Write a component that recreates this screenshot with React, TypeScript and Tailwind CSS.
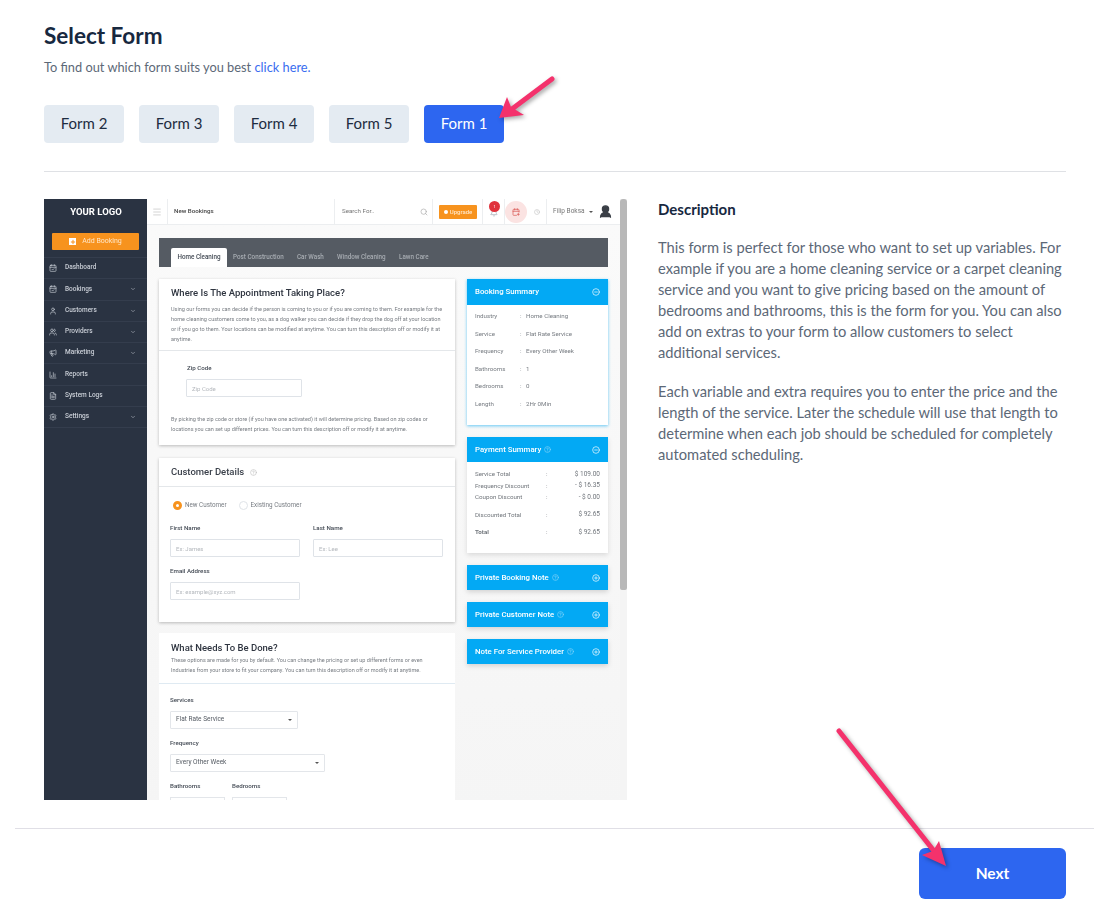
import { BarChart3, Bell, CalendarCheck, CalendarPlus, ChevronDown, CircleHelp, CircleMinus, CirclePlus, Clock, FileText, Megaphone, Menu, Plus, Search, Settings, User, UserRound, Users } from "lucide-react";
import type { ReactNode } from "react";

const forms = ["Form 2", "Form 3", "Form 4", "Form 5", "Form 1"];

const navItems = [
    { label: "Dashboard", icon: CalendarCheck, caret: false },
    { label: "Bookings", icon: CalendarCheck, caret: true },
    { label: "Customers", icon: User, caret: true },
    { label: "Providers", icon: Users, caret: true },
    { label: "Marketing", icon: Megaphone, caret: true },
    { label: "Reports", icon: BarChart3, caret: false },
    { label: "System Logs", icon: FileText, caret: false },
    { label: "Settings", icon: Settings, caret: true },
];

const bookingRows = [
    ["Industry", "Home Cleaning"],
    ["Service", "Flat Rate Service"],
    ["Frequency", "Every Other Week"],
    ["Bathrooms", "1"],
    ["Bedrooms", "0"],
    ["Length", "2Hr 0Min"],
];

function FieldLabel({ children }: { children: ReactNode }) {
    return <div className="h-[8px] text-[6.2px] leading-[8px] font-medium text-[#444b55]">{children}</div>;
}

function FakeInput({ text, className }: { text: string; className: string }) {
    return (
        <div className={`mt-[7px] h-[18px] flex items-center px-[5px] border border-[#dfe3e8] rounded-[1px] bg-white text-[6px] text-[#b4b8bd] ${className}`}>
            {text}
        </div>
    );
}

function FakeSelect({ text, className }: { text: string; className: string }) {
    return (
        <div className={`mt-[7px] h-[18px] flex items-center justify-between px-[5px] border border-[#e3e6ea] rounded-[1px] bg-white text-[6.5px] text-[#555b63] ${className}`}>
            {text}
            <span className="w-0 h-0 border-x-[2px] border-x-transparent border-t-[2px] border-t-[#555]" />
        </div>
    );
}

function NoteHeader({ title }: { title: string }) {
    return (
        <div className="h-[25px] flex items-center justify-between px-[8px] bg-[#03a9f4] text-white text-[7.8px] font-medium shadow-[0_2px_5px_rgba(0,0,0,0.15)]">
            <span className="flex items-center gap-[3px]">
                {title}
                <CircleHelp size={7} className="text-[#8fd8fa]" />
            </span>
            <CirclePlus size={8} />
        </div>
    );
}

function PaymentRow({ label, value, className = "" }: { label: string; value: string; className?: string }) {
    return (
        <div className="flex h-[11.5px] items-center text-[6.2px] text-[#71767c]">
            <span className={`w-[71px] ${className}`}>{label}</span>
            <span>:</span>
            <span className="ml-auto text-[6.5px]">{value}</span>
        </div>
    );
}

function Preview() {
    return (
        <div className="w-[583px] h-[601px] flex overflow-hidden bg-[#f4f4f4] font-['Roboto',sans-serif] blur-[0.3px]">
            <div className="w-[103px] shrink-0 bg-[#2a3342] text-[#c9ced6]">
                <div className="h-[26px] flex items-center justify-center pl-[1px] text-[9.5px] font-bold text-white">YOUR LOGO</div>
                <div className="h-[32px] pt-[8px] px-[8px]">
                    <div className="h-[17px] rounded-[1px] bg-[#f7931e] flex items-center justify-center gap-[6px] text-[7px] text-[#ffe6c7]">
                        <span className="w-[7px] h-[7px] bg-white flex items-center justify-center">
                            <Plus size={6} strokeWidth={4} className="text-[#f7931e]" />
                        </span>
                        Add Booking
                    </div>
                </div>
                {navItems.map(item => (
                    <div key={item.label} className="h-[21.3px] flex items-center pl-[5px] pr-[11px] border-t border-[#343d4d] text-[6.5px] font-medium">
                        <item.icon size={8} className="mr-[8px] shrink-0" />
                        {item.label}
                        {item.caret && <ChevronDown size={6} className="ml-auto" />}
                    </div>
                ))}
                <div className="border-t border-[#343d4d]" />
            </div>

            <div className="w-[473px] shrink-0 flex flex-col">
                <div className="h-[26px] shrink-0 flex items-center bg-white border-b border-[#eceef0] text-[6.2px] text-[#777]">
                    <div className="w-[21px] h-full flex items-center justify-center border-r border-[#eceef0]">
                        <Menu size={10} strokeWidth={1.2} className="text-[#aaa]" />
                    </div>
                    <div className="w-[167px] h-full flex items-center pl-[6px] border-r border-[#eceef0] font-medium text-[#444]">New Bookings</div>
                    <div className="w-[98px] h-full flex items-center justify-between pl-[7px] pr-[4px] border-r border-[#eceef0]">
                        Search For..
                        <Search size={8} className="text-[#aaa]" />
                    </div>
                    <div className="w-[50px] h-full flex items-center pl-[6px] border-r border-[#eceef0]">
                        <div className="w-[38px] h-[14px] bg-[#f7931e] rounded-[1px] flex items-center justify-center gap-[2px] text-[6px] text-[#ffe6c7] font-medium">
                            <span className="w-[4px] h-[4px] rounded-full bg-white" />
                            Upgrade
                        </div>
                    </div>
                    <div className="relative w-[22px] h-full flex items-center justify-center border-r border-[#eceef0]">
                        <Bell size={8} className="text-[#9aa3ad] mt-[3px]" />
                        <span className="absolute top-[2px] left-[6px] w-[11px] h-[11px] rounded-full bg-[#e0323c] flex items-center justify-center text-[4px] text-white">1</span>
                    </div>
                    <div className="w-[22px] h-[22px] rounded-full bg-[#fbe3e2] flex items-center justify-center">
                        <CalendarPlus size={8} className="text-[#d9534f]" />
                    </div>
                    <div className="w-[20px] h-full flex items-center justify-center border-r border-[#eceef0]">
                        <Clock size={6} className="text-[#bbb]" />
                    </div>
                    <div className="flex-1 h-full flex items-center pl-[6px] text-[6.5px]">
                        Filip Boksa
                        <span className="ml-[4px] w-0 h-0 border-x-[2px] border-x-transparent border-t-[2px] border-t-[#555]" />
                        <UserRound size={15} fill="#3a3f46" className="ml-[5px] text-[#3a3f46]" />
                    </div>
                </div>

                <div className="flex-1 px-[12px] pt-[13px] bg-gradient-to-b from-[#fafafa] to-[#f5f5f5]">
                    <div className="h-[29px] pt-[10px] pl-[12px] flex bg-[#555b63] text-[6.3px] font-medium text-[#a7acb2]">
                        <div className="w-[56px] h-[19px] bg-white rounded-t-[2px] flex items-center justify-center text-[#444b55]">Home Cleaning</div>
                        <div className="ml-[6px] h-[19px] flex items-center w-[64px]">Post Construction</div>
                        <div className="h-[19px] flex items-center w-[40px]">Car Wash</div>
                        <div className="h-[19px] flex items-center w-[62px]">Window Cleaning</div>
                        <div className="h-[19px] flex items-center">Lawn Care</div>
                    </div>

                    <div className="mt-[12px] flex gap-[12px]">
                        <div className="w-[296px] shrink-0">
                            <div className="h-[166px] bg-white shadow-[0_1px_3px_rgba(0,0,0,0.25)]">
                                <div className="h-[72px] px-[12px] pt-[7px] border-b border-[#e4e7ea]">
                                    <div className="h-[14px] text-[9.5px] leading-[14px] font-medium text-[#2f3540]">Where Is The Appointment Taking Place?</div>
                                    <div className="mt-[4px] text-[5.5px] leading-[10px] text-[#777c82] whitespace-nowrap">
                                        <div>Using our forms you can decide if the person is coming to you or if you are coming to them. For example for the</div>
                                        <div>home cleaning customers come to you, as a dog walker you can decide if they drop the dog off at your location</div>
                                        <div>or if you go to them. Your locations can be modified at anytime. You can turn this description off or modify it at</div>
                                        <div>anytime.</div>
                                    </div>
                                </div>
                                <div className="pt-[13px] px-[28px]">
                                    <FieldLabel>Zip Code</FieldLabel>
                                    <FakeInput text="Zip Code" className="w-[116px] -ml-[1px]" />
                                </div>
                                <div className="mt-[17px] px-[12px] text-[5.5px] leading-[10px] text-[#777c82] whitespace-nowrap">
                                    <div>By picking the zip code or store (if you have one activated) it will determine pricing. Based on zip codes or</div>
                                    <div>locations you can set up different prices. You can turn this description off or modify it at anytime.</div>
                                </div>
                            </div>

                            <div className="mt-[13px] h-[164px] bg-white shadow-[0_1px_3px_rgba(0,0,0,0.25)]">
                                <div className="h-[29px] px-[12px] pt-[1px] flex items-center gap-[6px] border-b border-[#e4e7ea] text-[9.5px] font-medium text-[#3b414b]">
                                    Customer Details
                                    <CircleHelp size={7} className="text-[#bbb]" />
                                </div>
                                <div className="px-[11px]">
                                    <div className="mt-[12px] h-[12px] leading-[12px] pl-[3px] flex items-center text-[6.3px] text-[#777c82]">
                                        <span className="w-[9px] h-[9px] rounded-full border-[3px] border-[#f7931e] bg-white mr-[3px]" />
                                        New Customer
                                        <span className="w-[9px] h-[9px] rounded-full border border-[#dfe3e8] ml-[12px] mr-[3px]" />
                                        Existing Customer
                                    </div>
                                    <div className="mt-[13px] grid grid-cols-[130px_130px] gap-x-[13px]">
                                        <div>
                                            <FieldLabel>First Name</FieldLabel>
                                            <FakeInput text="Ex: James" className="w-[130px]" />
                                        </div>
                                        <div>
                                            <FieldLabel>Last Name</FieldLabel>
                                            <FakeInput text="Ex: Lee" className="w-[130px]" />
                                        </div>
                                    </div>
                                    <div className="mt-[10px]">
                                        <FieldLabel>Email Address</FieldLabel>
                                        <FakeInput text="Ex: example@xyz.com" className="w-[130px]" />
                                    </div>
                                </div>
                            </div>

                            <div className="mt-[11px] h-[180px] bg-white">
                                <div className="h-[51px] px-[12px] pt-[8px] border-b border-[#dfeaf2]">
                                    <div className="h-[14px] text-[9.5px] leading-[14px] font-medium text-[#2f3540]">What Needs To Be Done?</div>
                                    <div className="text-[5.5px] leading-[10px] text-[#777c82] whitespace-nowrap">
                                        <div>These options are made for you by default. You can change the pricing or set up different forms or even</div>
                                        <div>Industries from your store to fit your company. You can turn this description off or modify it at anytime.</div>
                                    </div>
                                </div>
                                <div className="px-[11px] pt-[12px]">
                                    <FieldLabel>Services</FieldLabel>
                                    <FakeSelect text="Flat Rate Service" className="w-[128px]" />
                                    <div className="mt-[10px]">
                                        <FieldLabel>Frequency</FieldLabel>
                                    </div>
                                    <FakeSelect text="Every Other Week" className="w-[155px]" />
                                    <div className="mt-[10px] flex gap-[7px]">
                                        <div className="w-[55px]">
                                            <FieldLabel>Bathrooms</FieldLabel>
                                            <div className="mt-[7px] h-[18px] border border-[#e3e6ea]" />
                                        </div>
                                        <div className="w-[55px]">
                                            <FieldLabel>Bedrooms</FieldLabel>
                                            <div className="mt-[7px] h-[18px] border border-[#e3e6ea]" />
                                        </div>
                                    </div>
                                </div>
                            </div>
                        </div>

                        <div className="w-[141px] shrink-0 flex flex-col gap-[12px]">
                            <div className="h-[146px] bg-white shadow-[0_1px_3px_rgba(3,169,244,0.6)]">
                                <div className="h-[26px] flex items-center justify-between px-[8px] bg-[#03a9f4] text-white text-[7.8px] font-medium">
                                    Booking Summary
                                    <CircleMinus size={8} />
                                </div>
                                <div className="pt-[3px] px-[8px]">
                                    {bookingRows.map(([label, value]) => (
                                        <div key={label} className="h-[17.5px] flex items-center text-[6.2px] text-[#777c82]">
                                            <span className="w-[45px]">{label}</span>
                                            <span className="w-[6px]">:</span>
                                            {value}
                                        </div>
                                    ))}
                                </div>
                            </div>

                            <div className="h-[116px] bg-white shadow-[0_2px_5px_rgba(0,0,0,0.12)]">
                                <div className="h-[25px] flex items-center justify-between px-[8px] bg-[#03a9f4] text-white text-[7.8px] font-medium">
                                    <span className="flex items-center gap-[3px]">
                                        Payment Summary
                                        <CircleHelp size={7} className="text-[#8fd8fa]" />
                                    </span>
                                    <CircleMinus size={8} />
                                </div>
                                <div className="pt-[7px] pl-[8px] pr-[8px]">
                                    <PaymentRow label="Service Total" value="$ 109.00" />
                                    <PaymentRow label="Frequency Discount" value="- $ 16.35" />
                                    <PaymentRow label="Coupon Discount" value="- $ 0.00" />
                                    <div className="mt-[6px]">
                                        <PaymentRow label="Discounted Total" value="$ 92.65" />
                                    </div>
                                    <div className="mt-[6px]">
                                        <PaymentRow label="Total" value="$ 92.65" className="font-bold" />
                                    </div>
                                </div>
                            </div>

                            <NoteHeader title="Private Booking Note" />
                            <NoteHeader title="Private Customer Note" />
                            <NoteHeader title="Note For Service Provider" />
                        </div>
                    </div>
                </div>
            </div>

            <div className="w-[7px] shrink-0 bg-[#f4f4f4]">
                <div className="h-[391px] rounded-b-[2px] rounded-t-[3px] bg-[#b8b8b8]" />
            </div>
        </div>
    );
}

export default function App() {
    return (
        <div className="relative w-[1108px] h-[916px] bg-white font-['Lato',sans-serif] overflow-hidden">
            <div className="pl-[44px] pr-[42px] pt-[22px]">
                <h1 className="text-[22.5px] leading-[28px] font-bold text-[#17283f]">Select Form</h1>
                <p className="mt-[7px] text-[12.8px] leading-[20px] text-[#5c6877]">
                    To find out which form suits you best <a className="text-[#3a6df0]">click here.</a>
                </p>
                <div className="mt-[28px] flex gap-[15px]">
                    {forms.map(form => (
                        <button
                            key={form}
                            className={form === "Form 1"
                                ? "w-[80px] h-[38px] pb-[2px] rounded-[4px] bg-[#2d66f0] text-white text-[15px]"
                                : "w-[80px] h-[38px] pb-[2px] rounded-[4px] bg-[#e4ebf2] text-[#1d2c40] text-[15px]"}
                        >
                            {form}
                        </button>
                    ))}
                </div>
                <div className="mt-[28px] border-t border-[#dfe1e5]" />
                <div className="mt-[27px] flex gap-[31px]">
                    <Preview />
                    <div className="w-[408px] shrink-0">
                        <h2 className="text-[15px] leading-[21px] font-bold text-[#17283f]">Description</h2>
                        <div className="mt-[17px] text-[14.7px] leading-[21px] text-[#5c6877]">
                            <p>This form is perfect for those who want to set up variables. For example if you are a home cleaning service or a carpet cleaning service and you want to give pricing based on the amount of bedrooms and bathrooms, this is the form for you. You can also add on extras to your form to allow customers to select additional services.</p>
                            <p className="mt-[18px]">Each variable and extra requires you to enter the price and the length of the service. Later the schedule will use that length to determine when each job should be scheduled for completely automated scheduling.</p>
                        </div>
                    </div>
                </div>
            </div>

            <div className="mt-[28px] mx-[15px] w-[1079px] border-t border-[#e0dfe6]" />
            <div className="mt-[19px] pr-[42px] flex justify-end">
                <button className="w-[147px] h-[51px] rounded-[6px] bg-[#2d66f0] text-white text-[15.5px] font-bold">Next</button>
            </div>

            <svg className="absolute left-0 top-0 pointer-events-none drop-shadow-[2px_2px_2px_rgba(0,0,0,0.35)]" width="1108" height="916" viewBox="0 0 1108 916">
                <line x1="552" y1="79" x2="512" y2="109" stroke="#f4326c" strokeWidth="5" strokeLinecap="round" />
                <path d="M499 118 L507 97 L511 107 L524 115 Z" fill="#f4326c" />
                <line x1="839" y1="731" x2="934" y2="851" stroke="#f4326c" strokeWidth="5" strokeLinecap="round" />
                <path d="M946 866 L922 855 L933 851 L939 841 Z" fill="#f4326c" />
            </svg>
        </div>
    );
}
